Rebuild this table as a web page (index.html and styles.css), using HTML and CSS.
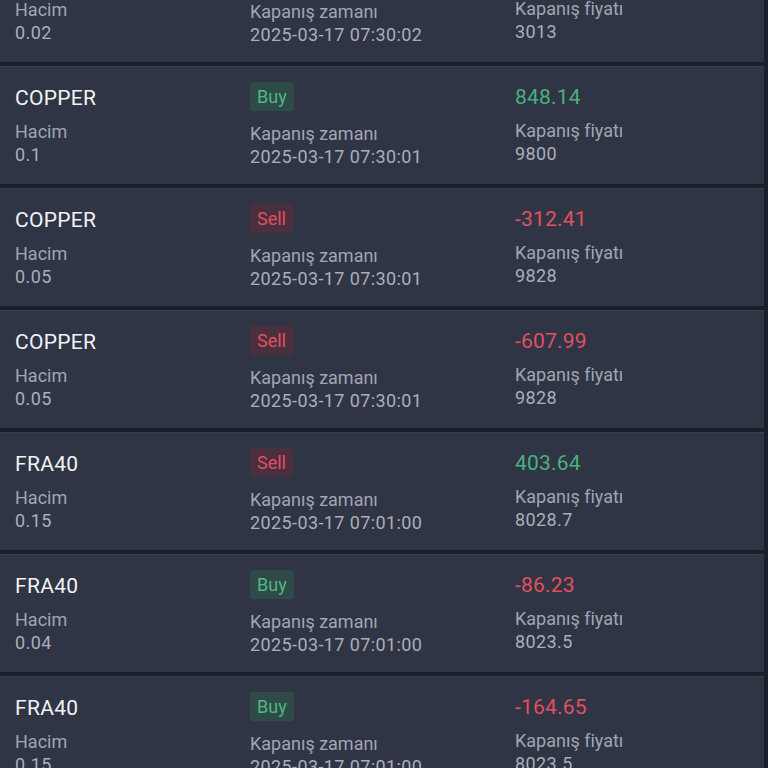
FILE: index.html
```html
<!DOCTYPE html>
<html lang="tr">
<head>
<meta charset="utf-8">
<title>İşlem geçmişi</title>
<link rel="stylesheet" href="styles.css">
</head>
<body>
<div class="list">
  <div class="card">
    <div class="col col-a"><div class="sym">XAUUSD</div><div class="lbl">Hacim</div><div class="val">0.02</div></div>
    <div class="col col-b"><span class="badge buy">Buy</span><div class="lbl">Kapanış zamanı</div><div class="val">2025-03-17 07:30:02</div></div>
    <div class="col col-c"><div class="pnl pos">12.40</div><div class="lbl">Kapanış fiyatı</div><div class="val">3013</div></div>
  </div>
  <div class="card">
    <div class="col col-a"><div class="sym">COPPER</div><div class="lbl">Hacim</div><div class="val">0.1</div></div>
    <div class="col col-b"><span class="badge buy">Buy</span><div class="lbl">Kapanış zamanı</div><div class="val">2025-03-17 07:30:01</div></div>
    <div class="col col-c"><div class="pnl pos">848.14</div><div class="lbl">Kapanış fiyatı</div><div class="val">9800</div></div>
  </div>
  <div class="card">
    <div class="col col-a"><div class="sym">COPPER</div><div class="lbl">Hacim</div><div class="val">0.05</div></div>
    <div class="col col-b"><span class="badge sell">Sell</span><div class="lbl">Kapanış zamanı</div><div class="val">2025-03-17 07:30:01</div></div>
    <div class="col col-c"><div class="pnl neg">-312.41</div><div class="lbl">Kapanış fiyatı</div><div class="val">9828</div></div>
  </div>
  <div class="card">
    <div class="col col-a"><div class="sym">COPPER</div><div class="lbl">Hacim</div><div class="val">0.05</div></div>
    <div class="col col-b"><span class="badge sell">Sell</span><div class="lbl">Kapanış zamanı</div><div class="val">2025-03-17 07:30:01</div></div>
    <div class="col col-c"><div class="pnl neg">-607.99</div><div class="lbl">Kapanış fiyatı</div><div class="val">9828</div></div>
  </div>
  <div class="card">
    <div class="col col-a"><div class="sym">FRA40</div><div class="lbl">Hacim</div><div class="val">0.15</div></div>
    <div class="col col-b"><span class="badge sell">Sell</span><div class="lbl">Kapanış zamanı</div><div class="val">2025-03-17 07:01:00</div></div>
    <div class="col col-c"><div class="pnl pos">403.64</div><div class="lbl">Kapanış fiyatı</div><div class="val">8028.7</div></div>
  </div>
  <div class="card">
    <div class="col col-a"><div class="sym">FRA40</div><div class="lbl">Hacim</div><div class="val">0.04</div></div>
    <div class="col col-b"><span class="badge buy">Buy</span><div class="lbl">Kapanış zamanı</div><div class="val">2025-03-17 07:01:00</div></div>
    <div class="col col-c"><div class="pnl neg">-86.23</div><div class="lbl">Kapanış fiyatı</div><div class="val">8023.5</div></div>
  </div>
  <div class="card">
    <div class="col col-a"><div class="sym">FRA40</div><div class="lbl">Hacim</div><div class="val">0.15</div></div>
    <div class="col col-b"><span class="badge buy">Buy</span><div class="lbl">Kapanış zamanı</div><div class="val">2025-03-17 07:01:00</div></div>
    <div class="col col-c"><div class="pnl neg">-164.65</div><div class="lbl">Kapanış fiyatı</div><div class="val">8023.5</div></div>
  </div>
</div>
</body>
</html>
```
FILE: styles.css
```css
html, body {
  margin: 0;
  padding: 0;
  background: #1b1f2a;
  overflow: hidden;
  height: 768px;
}
body {
  font-family: Roboto, "Noto Sans", sans-serif;
  color: #a2a7b2;
}
.list {
  display: flex;
  flex-direction: column;
  gap: 4px;
  margin-top: -56px;
  padding-right: 4px;
}
.card {
  background: #2f3545;
  border-top: 1px solid #394052;
  height: 117px;
  box-sizing: content-box;
  display: grid;
  grid-template-columns: 235px 265px 1fr;
  padding: 0 0 0 15px;
}
.col {
  display: flex;
  flex-direction: column;
  padding-top: 15px;
}
.sym {
  font-size: 21px;
  font-weight: 400;
  letter-spacing: 0.3px;
  color: #f1f3f6;
  line-height: 32px;
  margin-bottom: 6px;
}
.lbl, .val {
  font-size: 18px;
  line-height: 23px;
  color: #a0a6b2;
}
.val {
  color: #a9aeb9;
  letter-spacing: 0.4px;
}
.col-b .lbl { margin-top: 11px; }
.badge {
  align-self: flex-start;
  font-size: 18px;
  line-height: 29px;
  height: 29px;
  padding: 0 7px;
  border-radius: 3px;
}
.buy { background: #2f4b47; color: #50b683; }
.sell { background: #4a2f3f; color: #e24f60; }
.pnl {
  font-size: 21px;
  line-height: 30px;
  margin-bottom: 7px;
  letter-spacing: 0.2px;
}
.pos { color: #48b17e; }
.neg { color: #e2505f; }
```
